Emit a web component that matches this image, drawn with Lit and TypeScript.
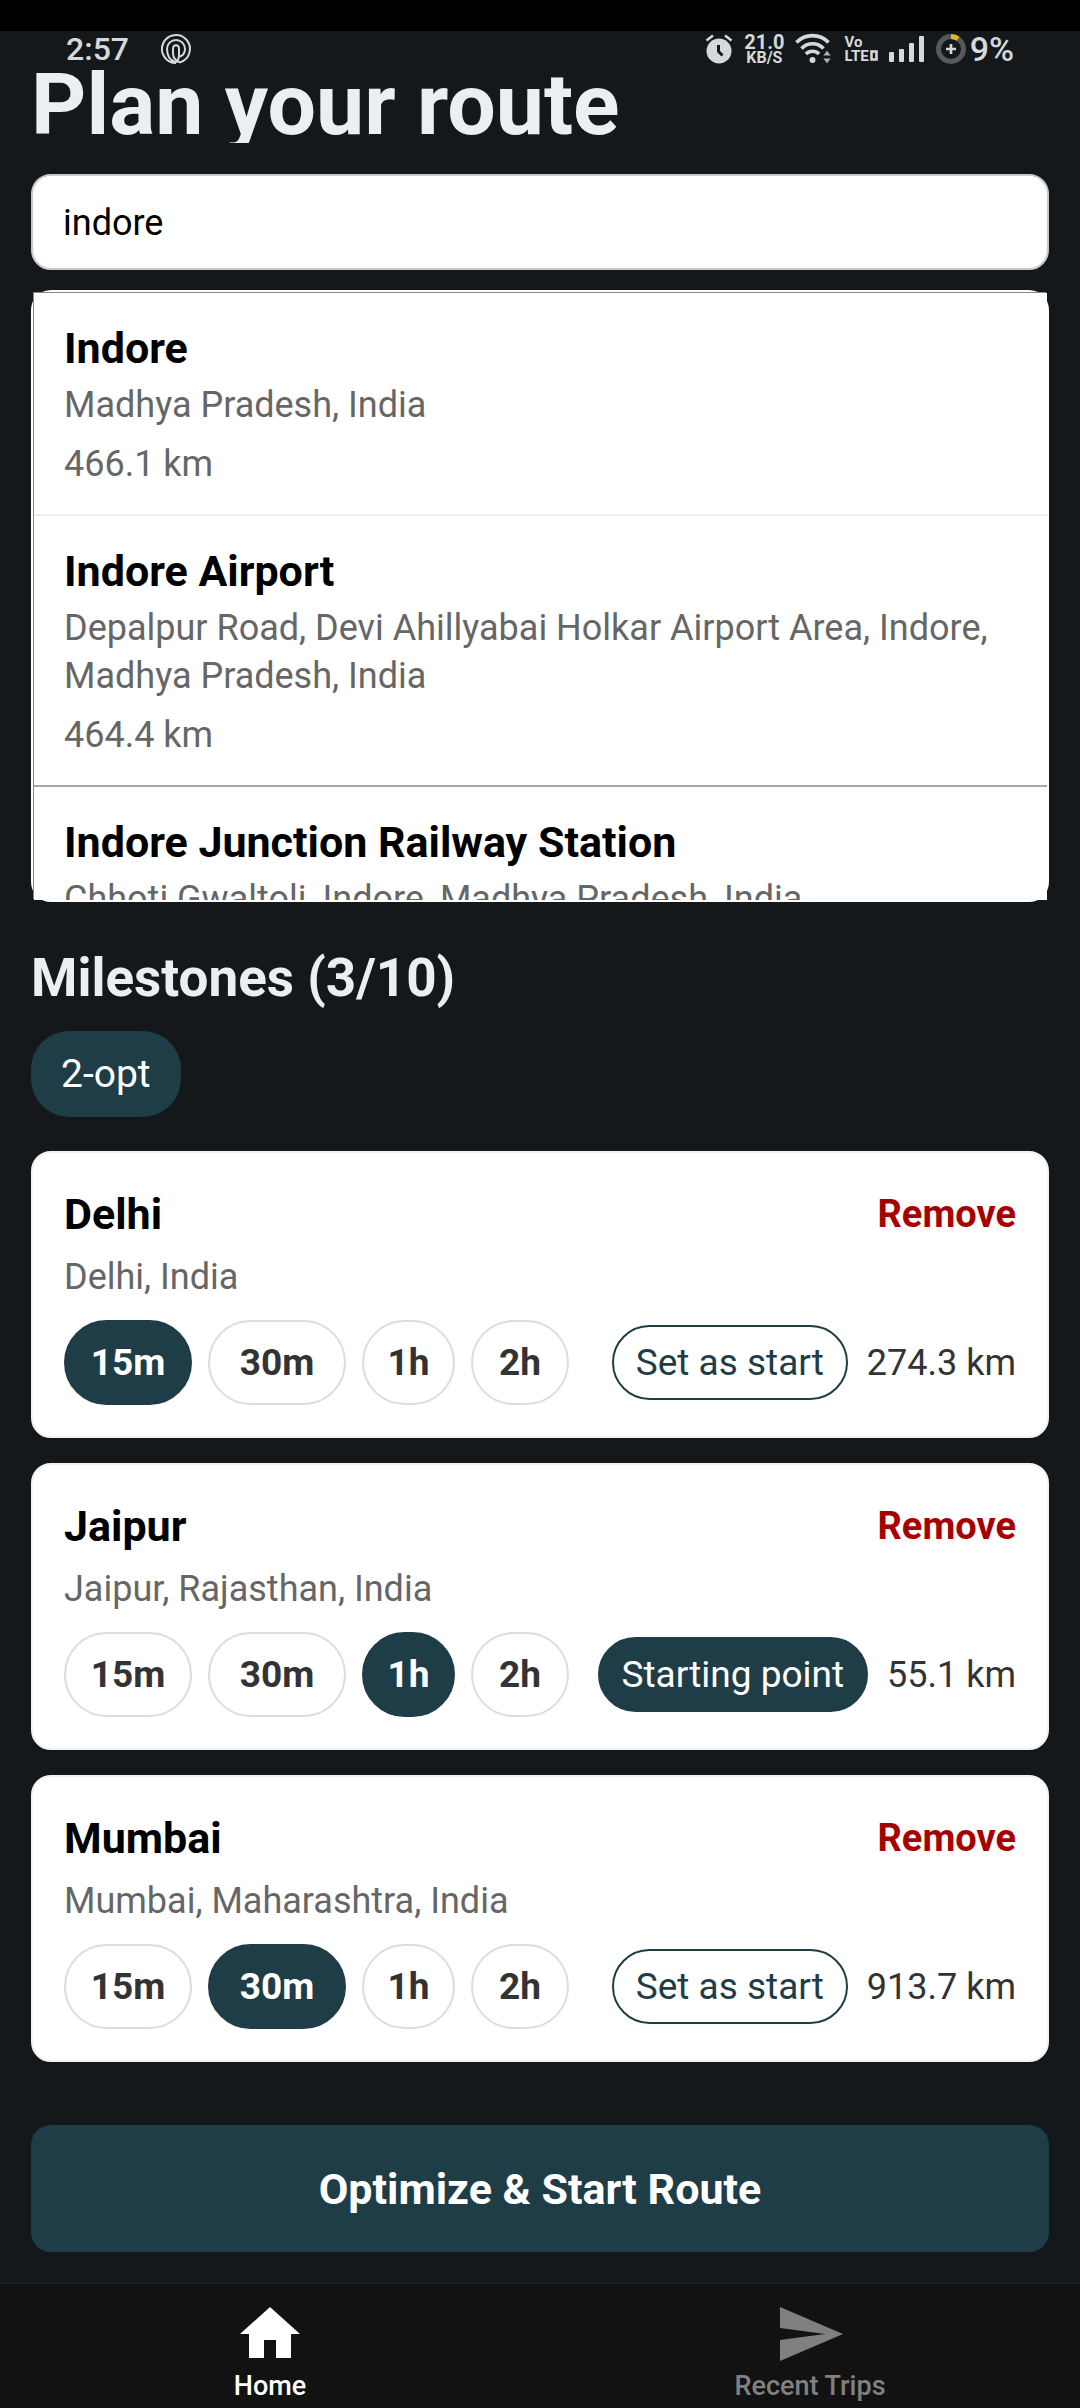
import { LitElement, html, svg, css } from "lit";
import { customElement, state } from "lit/decorators.js";
import { classMap } from "lit/directives/class-map.js";

interface Place {
  name: string;
  address: string;
  distance: string;
}

interface Milestone extends Place {
  stop: string;
  start: boolean;
}

const STOPS = ["15m", "30m", "1h", "2h"];

const SUGGESTIONS: Place[] = [
  { name: "Indore", address: "Madhya Pradesh, India", distance: "466.1 km" },
  {
    name: "Indore Airport",
    address: "Depalpur Road, Devi Ahillyabai Holkar Airport Area, Indore, Madhya Pradesh, India",
    distance: "464.4 km",
  },
  {
    name: "Indore Junction Railway Station",
    address: "Chhoti Gwaltoli, Indore, Madhya Pradesh, India",
    distance: "",
  },
];

@customElement("status-bar")
export class StatusBar extends LitElement {
  static styles = css`
    :host {
      display: block;
      border-top: 31px solid #000;
    }
    .bar {
      display: flex;
      align-items: center;
      height: 35px;
      padding: 0 66px;
      color: #d5d9d9;
      font-size: 32px;
      line-height: 34px;
      font-weight: 500;
    }
    .bar svg {
      display: block;
      overflow: visible;
    }
    .app {
      margin-left: 32px;
    }
    .system {
      display: flex;
      align-items: center;
      gap: 11px;
      margin-left: auto;
    }
    .stack {
      display: grid;
      justify-items: center;
      font-weight: 700;
    }
    .rate {
      font-size: 20px;
      line-height: 18px;
    }
    .unit {
      font-size: 16px;
      line-height: 14px;
    }
    .volte {
      justify-items: start;
      font-size: 15px;
      line-height: 14px;
    }
    .lte {
      display: flex;
      align-items: center;
      gap: 1px;
    }
    .battery {
      display: flex;
      align-items: center;
      gap: 4px;
      font-size: 34px;
    }
  `;

  render() {
    return html`
      <div class="bar">
        <span>2:57</span>
        <svg class="app" width="30" height="30" viewBox="0 0 30 30" fill="none" stroke="currentColor" stroke-width="2" aria-hidden="true">
          <path d="M15 29A14 14 0 1 1 19 28.400C15 27 12 24 12 19V15c0-5 6-5 6 0v5c0 4-1 9-4 8C9 26 6 21 6 15a9 9 0 0 1 18 0c0 5-3 7-6 8" />
        </svg>
        <div class="system">
          <svg width="28" height="30" viewBox="0 0 28 30" aria-hidden="true">
            <circle cx="14" cy="17" r="12.500" fill="currentColor" />
            <path d="M1.500 6.500 8 1.500M20 1.500l6.500 5" stroke="currentColor" stroke-width="2.600" fill="none" />
            <path d="M13.500 11v6.500l4 4" stroke="#14181a" stroke-width="3" fill="none" />
          </svg>
          <div class="stack"><span class="rate">21.0</span><span class="unit">KB/S</span></div>
          <svg width="38" height="30" viewBox="0 0 38 30" aria-hidden="true">
            <g fill="none" stroke="currentColor" stroke-width="3.600">
              <path d="M1.500 8.500a22 22 0 0 1 32 0" />
              <path d="M6.500 14.500a15 15 0 0 1 22 0" />
              <path d="M11 20a9 9 0 0 1 13 0" />
            </g>
            <circle cx="17.500" cy="26" r="3" fill="currentColor" />
            <path d="M27.500 22 32 16l4.500 6zM27.500 24 32 30 36.500 24z" fill="#aeb1b2" stroke="#14181a" stroke-width="1" />
          </svg>
          <div class="stack volte">
            <span>Vo</span>
            <span class="lte">LTE<svg width="8" height="11" viewBox="0 0 8 11" aria-hidden="true"><path d="M1.500 1.500h5v8h-5z" fill="none" stroke="currentColor" stroke-width="2.600" /></svg></span>
          </div>
          <svg width="36" height="28" viewBox="0 0 36 28" fill="currentColor" aria-hidden="true">
            <rect x="0" y="17" width="5" height="10" rx="1" />
            <rect x="10" y="14" width="5" height="13" rx="1" />
            <rect x="20" y="8" width="5" height="19" rx="1" />
            <rect x="30" y="1" width="5" height="26" rx="1" />
          </svg>
          <div class="battery">
            <svg width="30" height="30" viewBox="0 0 30 30" fill="none" aria-hidden="true">
              <circle cx="15" cy="15" r="12.500" stroke="#55595b" stroke-width="5" />
              <path d="M15 2.500a12.500 12.500 0 0 1 7 2.200" stroke="#e9b41c" stroke-width="5" />
              <path d="M15 10v10M10 15h10" stroke="currentColor" stroke-width="2.600" />
            </svg>
            <span>9%</span>
          </div>
        </div>
      </div>
    `;
  }
}

@customElement("app-root")
export class AppRoot extends LitElement {
  static styles = css`
    :host {
      display: flex;
      flex-direction: column;
      min-height: 100vh;
      background: #14181a;
      color: #000;
      font-family: Roboto, "Liberation Sans", sans-serif;
      font-size: 36px;
      line-height: 48px;
    }
    * {
      box-sizing: border-box;
      margin: 0;
    }
    button,
    input {
      font: inherit;
      color: inherit;
    }
    button {
      border: 0;
      padding: 0;
      background: none;
      cursor: pointer;
    }
    main {
      flex: 1;
      padding: 0 31px 30px;
    }
    .title {
      overflow: hidden;
      color: #ebeff2;
      font-size: 86px;
      line-height: 77px;
      font-weight: 700;
    }
    .search {
      display: block;
      width: 100%;
      height: 96px;
      margin-top: 31px;
      padding: 2px 30px 0;
      border: 2px solid #c9c9cc;
      border-radius: 20px;
      background: #fff;
    }
    .dropdown {
      margin-top: 20px;
      padding: 3px 2px 2px 3px;
      border-radius: 20px;
      background: #fff;
    }
    .list {
      max-height: 607px;
      overflow-y: auto;
      scrollbar-width: none;
      background: #fff;
      box-shadow: -1px -1px 0 #8a8a8a;
    }
    .place {
      display: flex;
      flex-direction: column;
      width: 100%;
      padding: 28px 30px 26px;
      border-bottom: 2px solid #eee;
      text-align: left;
    }
    .place:nth-child(2) {
      border-bottom-color: #a8a8a8;
    }
    .name {
      font-size: 43px;
      line-height: 54px;
      font-weight: 700;
    }
    .address {
      color: #666;
    }
    .place .address {
      margin: 6px 0 11px;
    }
    .place .distance {
      color: #666;
    }
    .heading {
      margin-top: 45px;
      color: #ebeff2;
      font-size: 53px;
      line-height: 62px;
      font-weight: 700;
    }
    .method {
      display: block;
      height: 86px;
      margin-top: 22px;
      padding: 0 30px;
      border-radius: 38px;
      background: #1f3d47;
      color: #fff;
      font-size: 39px;
    }
    .cards {
      display: grid;
      gap: 25px;
      margin-top: 34px;
    }
    .card {
      padding: 34px 31px 31px;
      border: 2px solid #f2f2f2;
      border-radius: 20px;
      background: #fff;
    }
    .row {
      display: flex;
      align-items: center;
      justify-content: space-between;
    }
    .remove {
      color: #a60000;
      font-size: 38px;
      font-weight: 700;
    }
    .card .address {
      margin: 12px 0 19px;
    }
    .stops {
      display: grid;
      grid-template-columns: 128px 138px 93px 98px;
      gap: 16px;
    }
    .stop {
      height: 85px;
      border: 2px solid #ddd;
      border-radius: 43px;
      color: #333;
      font-size: 37px;
      font-weight: 700;
    }
    .origin {
      display: flex;
      align-items: center;
      gap: 19px;
      color: #333;
    }
    .start {
      height: 75px;
      padding: 0 22px;
      border: 2px solid #1f3d47;
      border-radius: 38px;
      color: #1f3d47;
      font-size: 37px;
    }
    .selected {
      border-color: #1f3d47;
      background: #1f3d47;
      color: #fff;
    }
    .go {
      display: block;
      width: 100%;
      height: 127px;
      margin-top: 63px;
      border-radius: 20px;
      background: #1f3d47;
      color: #fff;
      font-size: 43px;
      font-weight: 700;
    }
    .tabs {
      display: grid;
      grid-template-columns: 1fr 1fr;
      padding: 14px 0 5px;
      border-top: 2px solid #1f1f1f;
      background: #121212;
    }
    .tab {
      display: grid;
      justify-items: center;
      color: #808080;
      font-size: 27px;
      line-height: 33px;
      font-weight: 500;
      text-decoration: none;
    }
    .tab.current {
      color: #fff;
    }
    .tab svg {
      display: block;
      width: 72px;
      height: 72px;
      fill: currentColor;
    }
  `;

  @state() private query = "indore";

  @state() private milestones: Milestone[] = [
    { name: "Delhi", address: "Delhi, India", distance: "274.3 km", stop: "15m", start: false },
    { name: "Jaipur", address: "Jaipur, Rajasthan, India", distance: "55.1 km", stop: "1h", start: true },
    { name: "Mumbai", address: "Mumbai, Maharashtra, India", distance: "913.7 km", stop: "30m", start: false },
  ];

  private setStop(target: Milestone, stop: string) {
    this.milestones = this.milestones.map((m) => (m === target ? { ...m, stop } : m));
  }

  private setStart(target: Milestone) {
    this.milestones = this.milestones.map((m) => ({ ...m, start: m === target }));
  }

  private remove(target: Milestone) {
    this.milestones = this.milestones.filter((m) => m !== target);
  }

  private renderPlace(place: Place) {
    return html`
      <button class="place" type="button">
        <span class="name">${place.name}</span>
        <span class="address">${place.address}</span>
        <span class="distance">${place.distance}</span>
      </button>
    `;
  }

  private renderMilestone(m: Milestone) {
    return html`
      <article class="card">
        <div class="row">
          <h3 class="name">${m.name}</h3>
          <button class="remove" type="button" @click=${() => this.remove(m)}>Remove</button>
        </div>
        <p class="address">${m.address}</p>
        <div class="row">
          <div class="stops" role="group" aria-label="Stop duration">
            ${STOPS.map(
              (stop) => html`<button
                type="button"
                class=${classMap({ stop: true, selected: m.stop === stop })}
                aria-pressed=${m.stop === stop ? "true" : "false"}
                @click=${() => this.setStop(m, stop)}
              >${stop}</button>`,
            )}
          </div>
          <div class="origin">
            <button
              type="button"
              class=${classMap({ start: true, selected: m.start })}
              @click=${() => this.setStart(m)}
            >${m.start ? "Starting point" : "Set as start"}</button>
            <span>${m.distance}</span>
          </div>
        </div>
      </article>
    `;
  }

  private renderTab(label: string, href: string, path: string, current: boolean) {
    return html`
      <a class=${classMap({ tab: true, current })} href=${href}>
        <svg viewBox="0 0 24 24" aria-hidden="true">${svg`<path d=${path} />`}</svg>
        <span>${label}</span>
      </a>
    `;
  }

  render() {
    return html`
      <status-bar></status-bar>
      <main>
        <h1 class="title">Plan your route</h1>
        <input
          class="search"
          type="text"
          aria-label="Search places"
          .value=${this.query}
          @input=${(e: Event) => (this.query = (e.target as HTMLInputElement).value)}
        />
        <div class="dropdown">
          <div class="list">${SUGGESTIONS.map((place) => this.renderPlace(place))}</div>
        </div>
        <h2 class="heading">Milestones (${this.milestones.length}/10)</h2>
        <button class="method" type="button">2-opt</button>
        <section class="cards">${this.milestones.map((m) => this.renderMilestone(m))}</section>
        <button class="go" type="button">Optimize &amp; Start Route</button>
      </main>
      <nav class="tabs">
        ${this.renderTab("Home", "#home", "M10 20v-6h4v6h5v-8h3L12 3 2 12h3v8z", true)}
        ${this.renderTab("Recent Trips", "#trips", "M2 21L23 12 2 3v7l15 2-15 2z", false)}
      </nav>
    `;
  }
}
